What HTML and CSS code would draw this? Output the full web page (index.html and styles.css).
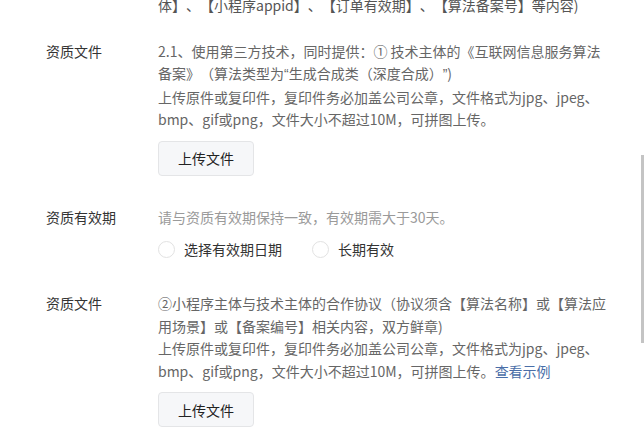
FILE: index.html
```html
<!DOCTYPE html>
<html lang="zh-CN">
<head>
<meta charset="utf-8">
<link rel="stylesheet" href="styles.css">
</head>
<body>
<div class="page">
  <div class="form">
    <div class="item item-top">
      <div class="label"></div>
      <div class="content">
        <p class="text dark">体】、【小程序appid】、【订单有效期】、【算法备案号】等内容)</p>
      </div>
    </div>

    <div class="item item-1">
      <div class="label">资质文件</div>
      <div class="content">
        <p class="text">2.1、使用第三方技术，同时提供：① 技术主体的《互联网信息服务算法备案》（算法类型为<span class="q">“</span>生成合成类（深度合成）<span class="q">”</span>)</p>
        <p class="text">上传原件或复印件，复印件务必加盖公司公章，文件格式为jpg、jpeg、bmp、gif或png，文件大小不超过10M，可拼图上传。</p>
        <button class="upload">上传文件</button>
      </div>
    </div>

    <div class="item item-2">
      <div class="label">资质有效期</div>
      <div class="content">
        <p class="text hint">请与资质有效期保持一致，有效期需大于30天。</p>
        <div class="radios">
          <label class="radio"><span class="dot"></span>选择有效期日期</label>
          <label class="radio"><span class="dot"></span>长期有效</label>
        </div>
      </div>
    </div>

    <div class="item item-3">
      <div class="label">资质文件</div>
      <div class="content">
        <p class="text">②小程序主体与技术主体的合作协议（协议须含【算法名称】或【算法应用场景】或【备案编号】相关内容，双方鲜章)</p>
        <p class="text">上传原件或复印件，复印件务必加盖公司公章，文件格式为jpg、jpeg、bmp、gif或png，文件大小不超过10M，可拼图上传。<a class="link">查看示例</a></p>
        <button class="upload">上传文件</button>
      </div>
    </div>
  </div>
  <div class="scrollbar"><div class="thumb"></div></div>
</div>
</body>
</html>
```

FILE: styles.css
```css
html, body {
  margin: 0;
  padding: 0;
  background: #ffffff;
  overflow: hidden;
}
body {
  font-family: "Noto Sans CJK SC", "Microsoft YaHei", sans-serif;
  font-size: 14px;
  color: #333;
  text-spacing-trim: space-all;
}
.page {
  position: relative;
  width: 644px;
  height: 440px;
  overflow: hidden;
}
.form {
  padding-left: 46px;
}
.item {
  display: flex;
  align-items: flex-start;
}
.label {
  width: 112px;
  flex: none;
  line-height: 22.5px;
  color: #333;
}
.content {
  width: 455px;
}
.text {
  margin: 0;
  line-height: 22.5px;
  color: #666;
}
.text.dark {
  color: #555;
}
.text.hint {
  color: #9a9a9a;
}
.q {
  font-family: "Liberation Sans", sans-serif;
}
.item-top {
  margin-top: -6px;
}
.item-1 {
  margin-top: 23px;
}
.item-2 {
  margin-top: 30px;
}
.item-3 {
  margin-top: 32px;
}
.upload {
  display: block;
  margin-top: 10px;
  width: 96px;
  height: 35px;
  padding: 0;
  border: 1px solid #e4e5e7;
  border-radius: 4px;
  background: #f6f7f9;
  font-family: inherit;
  font-size: 14px;
  color: #222;
}
.radios {
  display: flex;
  gap: 30px;
  margin-top: 10px;
  height: 22px;
  align-items: center;
}
.radio {
  display: flex;
  align-items: center;
  gap: 9px;
  color: #333;
  line-height: 22px;
}
.dot {
  width: 15px;
  height: 15px;
  border: 1px solid #e2e2e2;
  border-radius: 50%;
  background: #fff;
}
.link {
  color: #4a6ea8;
}
.scrollbar {
  position: absolute;
  top: 0;
  right: 0;
  width: 3px;
  height: 440px;
}
.thumb {
  position: absolute;
  top: 155px;
  left: 0;
  width: 3px;
  height: 188px;
  background: #c4c4c4;
}
```
